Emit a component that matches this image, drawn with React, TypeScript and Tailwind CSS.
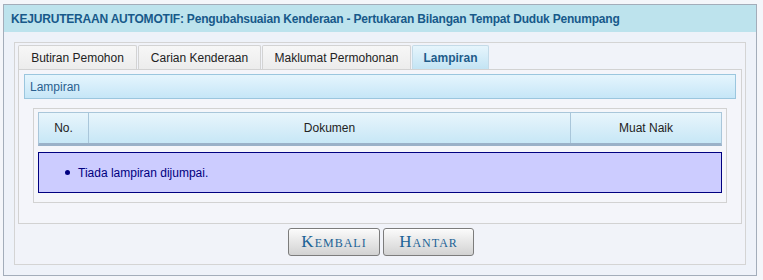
const tabs = [
  { label: "Butiran Pemohon", w: "w-[119px]" },
  { label: "Carian Kenderaan", w: "w-[123px]" },
  { label: "Maklumat Permohonan", w: "w-[149px]" },
  { label: "Lampiran", w: "w-[77px]", active: true },
];

function Tab({ label, w, active }: { label: string; w: string; active?: boolean }) {
  if (active) {
    return (
      <div
        className={`flex h-[24px] items-center justify-center rounded-t-[2px] border border-b-0 border-[#c4dbe8] bg-gradient-to-b from-[#e6f5fc] to-[#c3e4f4] text-[12px] font-bold text-[#1e5c8a] ${w}`}
      >
        {label}
      </div>
    );
  }
  return (
    <div
      className={`flex h-[24px] items-center justify-center rounded-t-[2px] border border-b-0 border-[#d3d3d3] bg-gradient-to-b from-[#f7f7f7] to-[#ececec] text-[12px] text-[#222] ${w}`}
    >
      {label}
    </div>
  );
}

function Button({ label }: { label: string }) {
  return (
    <button
      type="button"
      className="flex h-[28px] w-full items-center justify-center rounded-[3px] border border-[#7c7c7c] bg-gradient-to-b from-[#fbfbfb] to-[#d2d2d2] text-[17px] tracking-[1px] text-[#1b6396] shadow-[inset_0_1px_0_#ffffff]"
      style={{ fontFamily: '"Liberation Serif", serif', fontVariant: "small-caps" }}
    >
      {label}
    </button>
  );
}

export default function App() {
  return (
    <div
      className="h-[280px] w-[763px] bg-[#f4f6fa] pl-[3px] pt-[4px] text-[12px]"
      style={{ fontFamily: '"Liberation Sans", Arial, sans-serif' }}
    >
      <div className="h-[272px] w-[754px] border border-[#a3adba] bg-[#eef2f9]">
        <div className="flex h-[27px] items-center bg-[#bde3ed] pl-[7px] text-[12px] font-bold tracking-[-0.2px] text-[#17598a]">
          KEJURUTERAAN AUTOMOTIF: Pengubahsuaian Kenderaan - Pertukaran Bilangan Tempat Duduk Penumpang
        </div>

        <div className="ml-[10px] mt-[10px] h-[223px] w-[732px] border border-[#d4d4d4] bg-[#f1f3f9] pl-[3px] pt-[2px]">
          <div className="w-[724px]">
            <div className="flex gap-[1px]">
              {tabs.map((t) => (
                <Tab key={t.label} label={t.label} w={t.w} active={t.active} />
              ))}
            </div>

            <div className="h-[155px] border border-[#d2d2d2] bg-[#f4f5fa] pl-[5px] pt-[4px]">
              <div className="flex h-[25px] w-[712px] items-center border border-[#9bc6de] bg-gradient-to-b from-[#e5f5fd] to-[#c6e6f7] pl-[5px] text-[12px] text-[#2a5f8f]">
                Lampiran
              </div>

              <div className="ml-[9px] mt-[9px] w-[694px] border border-[#d2d2d2] bg-[#f5f6fa] px-[4px] pb-[9px] pt-[3px]">
                <div className="flex h-[34px] w-[684px] border border-b-[3px] border-[#a9c6da] border-b-[#9ab1c8] bg-gradient-to-b from-[#e8f5fc] to-[#c7e7f6] text-[12px] text-[#222]">
                  <div className="flex w-[50px] items-center justify-center border-r border-[#a9c6da]">No.</div>
                  <div className="flex w-[482px] items-center justify-center border-r border-[#a9c6da]">Dokumen</div>
                  <div className="flex flex-1 items-center justify-center">Muat Naik</div>
                </div>

                <div className="mt-[6px] flex h-[41px] w-[684px] items-center border border-[#000080] bg-[#ccccff] pl-[26px] text-[12px] text-[#000080]">
                  <span className="mr-[8px] inline-block h-[5px] w-[5px] rounded-full bg-[#000080]" />
                  Tiada lampiran dijumpai.
                </div>
              </div>
            </div>

            <div className="mt-[4px] flex justify-center gap-[3px] pl-[2px]">
              <div className="w-[92px]">
                <Button label="Kembali" />
              </div>
              <div className="w-[91px]">
                <Button label="Hantar" />
              </div>
            </div>
          </div>
        </div>
      </div>
    </div>
  );
}
